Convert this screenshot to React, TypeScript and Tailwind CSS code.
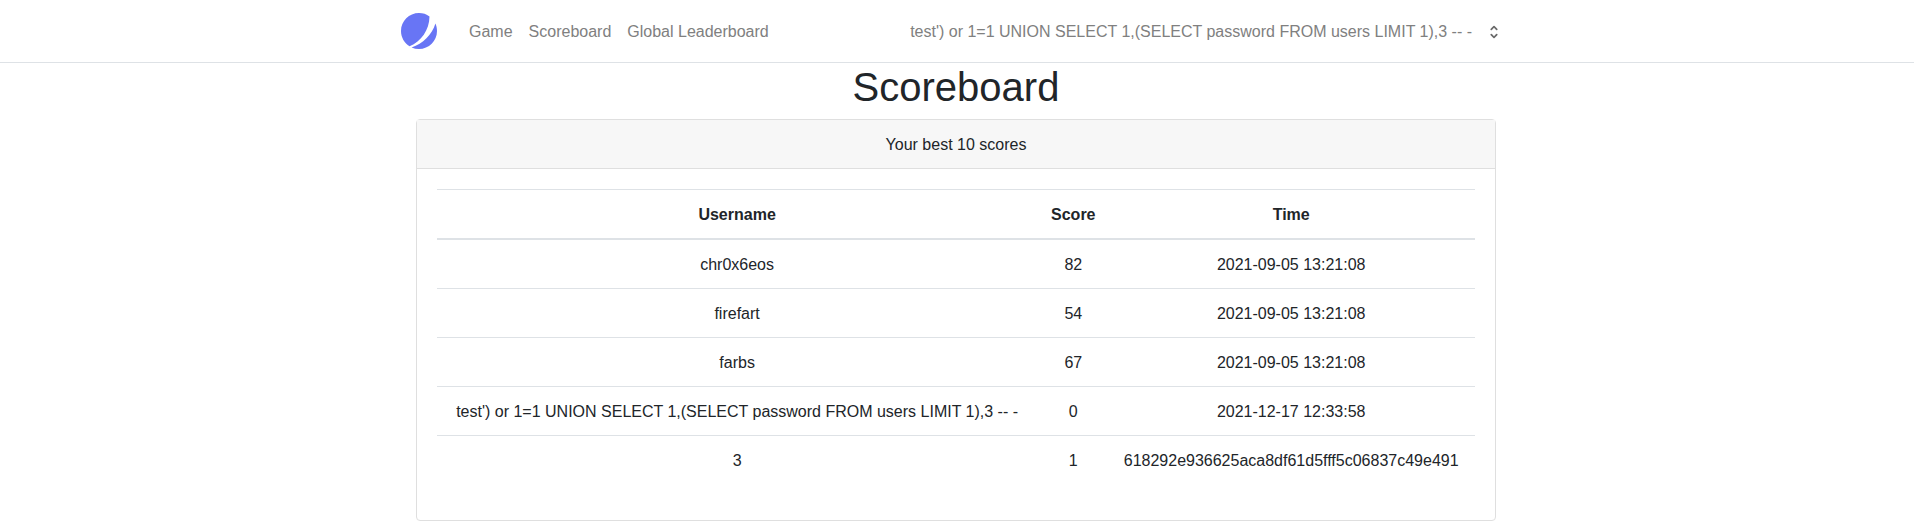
const rows = [
  ["chr0x6eos", "82", "2021-09-05 13:21:08"],
  ["firefart", "54", "2021-09-05 13:21:08"],
  ["farbs", "67", "2021-09-05 13:21:08"],
  ["test') or 1=1 UNION SELECT 1,(SELECT password FROM users LIMIT 1),3 -- -", "0", "2021-12-17 12:33:58"],
  ["3", "1", "618292e936625aca8df61d5fff5c06837c49e491"],
];

const columns = ["Username", "Score", "Time"];

export default function App() {
  return (
    <div className="min-h-screen bg-white font-['Liberation_Sans',Arial,sans-serif] text-base leading-6 text-[#212529]">
      <nav className="h-[63px] border-b border-[#dee2e6] pr-0.5">
        <div className="mx-auto flex h-full w-[1110px] items-center text-[#808080]">
          <svg className="h-9 w-9" viewBox="0 0 48 48" fill="#6875f5">
            <path d="M11.395 44.428C4.557 40.198 0 32.632 0 24 0 10.745 10.745 0 24 0a23.891 23.891 0 0113.997 4.502c-.2 17.907-11.097 33.245-26.602 39.926z" />
            <path d="M14.134 45.885A23.914 23.914 0 0024 48c13.255 0 24-10.745 24-24 0-3.516-.756-6.856-2.115-9.866-4.659 15.143-16.608 27.092-31.75 31.751z" />
          </svg>
          <div className="ml-8 flex gap-4 pt-0.5">
            <a>Game</a>
            <a>Scoreboard</a>
            <a>Global Leaderboard</a>
          </div>
          <div className="mr-2 ml-auto flex items-center">
            <span className="pt-0.5">test') or 1=1 UNION SELECT 1,(SELECT password FROM users LIMIT 1),3 -- -</span>
            <svg className="mt-0.5 ml-[13px] h-[18px] w-[18px] text-[#6a6a6a]" viewBox="0 0 20 20" fill="currentColor">
              <path fillRule="evenodd" clipRule="evenodd" d="M10 3a1 1 0 01.707.293l3 3a1 1 0 01-1.414 1.414L10 5.414 7.707 7.707a1 1 0 01-1.414-1.414l3-3A1 1 0 0110 3zm-3.707 9.293a1 1 0 011.414 0L10 14.586l2.293-2.293a1 1 0 011.414 1.414l-3 3a1 1 0 01-1.414 0l-3-3a1 1 0 010-1.414z" />
            </svg>
          </div>
        </div>
      </nav>
      <div className="pr-0.5">
        <main className="mx-auto w-[1080px] text-center">
          <h1 className="mb-2 text-[40px] leading-[48px]">Scoreboard</h1>
          <section className="h-[402px] rounded border border-[#dfdfdf]">
            <header className="border-b border-[#dfdfdf] bg-[#f7f7f7] pt-[13px] pb-[11px]">Your best 10 scores</header>
            <div className="p-5">
              <table className="w-full border-collapse">
                <thead>
                  <tr>
                    {columns.map((c) => (
                      <th key={c} className="border-t border-b-2 border-[#dee2e6] px-3 pt-[13px] pb-[11px] nth-2:pr-[11px] nth-2:pl-[13px]">{c}</th>
                    ))}
                  </tr>
                </thead>
                <tbody>
                  {rows.map((r) => (
                    <tr key={r[0]}>
                      {r.map((c) => (
                        <td key={c} className="border-t border-[#dee2e6] px-3 pt-[13px] pb-[11px] nth-2:pr-[11px] nth-2:pl-[13px]">{c}</td>
                      ))}
                    </tr>
                  ))}
                </tbody>
              </table>
            </div>
          </section>
        </main>
      </div>
    </div>
  );
}
